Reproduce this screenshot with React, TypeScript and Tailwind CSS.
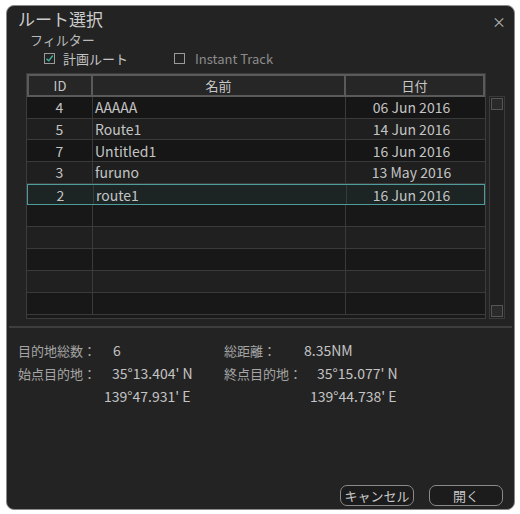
const font = { fontFamily: '"Noto Sans CJK JP", "Noto Sans", sans-serif' };

const rows = [
  { id: "4", name: "AAAAA", date: "06 Jun 2016" },
  { id: "5", name: "Route1", date: "14 Jun 2016" },
  { id: "7", name: "Untitled1", date: "16 Jun 2016" },
  { id: "3", name: "furuno", date: "13 May 2016" },
  { id: "2", name: "route1", date: "16 Jun 2016", selected: true },
];

function Check({ checked }: { checked?: boolean }) {
  return (
    <span className="inline-flex h-[11px] w-[11px] items-center justify-center border border-[#9a9a9a]">
      {checked && (
        <svg viewBox="0 0 12 12" className="h-[11px] w-[11px]">
          <path d="M2 6.5 L5 9 L10.5 2" fill="none" stroke="#3fb0a0" strokeWidth="1.8" />
        </svg>
      )}
    </span>
  );
}

export default function App() {
  const empty = Array.from({ length: 5 });
  return (
    <div className="h-[514px] w-[520px] bg-white pl-[6px] pt-[5px] text-[#c4c4c4]" style={font}>
      <div className="flex h-[505px] w-[509px] flex-col rounded-[8px] border border-[#8a8a8a] bg-[#232323]">
        <div className="flex h-[22px] items-center justify-between pl-[11px] pr-[8px] pt-[2px]">
          <span className="text-[17px] leading-none text-[#cccccc]">ルート選択</span>
          <span className="mt-[6px] text-[14px] leading-none text-[#b5b5b5]">×</span>
        </div>
        <div className="pl-[23px] pt-[4px] text-[13px] leading-[15px] text-[#b8b8b8]">フィルター</div>
        <div className="flex h-[22px] items-center pl-[37px] text-[13px] leading-none">
          <Check checked />
          <span className="ml-[8px]">計画ルート</span>
          <span className="ml-[46px]"><Check /></span>
          <span className="ml-[10px] text-[#8c8c8c]">Instant Track</span>
        </div>
        <div className="mt-[4px] flex pl-[19px]">
          <div className="w-[460px] border border-[#3c3c3c] bg-[#1a1a1a]">
            <div className="grid h-[23px] grid-cols-[66px_253px_1fr] text-[13px] leading-none text-[#c8c8c8]">
              <div className="flex items-center justify-center border-2 border-[#5a5a5a] bg-[#262626]">ID</div>
              <div className="flex items-center justify-center border-2 border-l-0 border-[#5a5a5a] bg-[#262626]">名前</div>
              <div className="flex items-center justify-center border-2 border-l-0 border-[#5a5a5a] bg-[#262626]">日付</div>
            </div>
            {rows.map((r, i) => (
              <div
                key={r.id}
                className={
                  r.selected
                    ? "grid h-[21.7px] grid-cols-[66px_253px_1fr] border border-[#4f9c9c] bg-[#1c2524] text-[14px] leading-none"
                    : i % 2 === 0
                    ? "grid h-[21.7px] grid-cols-[66px_253px_1fr] border-b border-[#3a3a3a] bg-[#161616] text-[14px] leading-none"
                    : "grid h-[21.7px] grid-cols-[66px_253px_1fr] border-b border-[#3a3a3a] bg-[#1f1f1f] text-[14px] leading-none"
                }
              >
                <div className="flex items-center justify-center border-r border-[#3a3a3a]">{r.id}</div>
                <div className="flex items-center border-r border-[#3a3a3a] pl-[2px]">{r.name}</div>
                <div className="flex items-center justify-center pr-[8px]">{r.date}</div>
              </div>
            ))}
            {empty.map((_, i) => (
              <div
                key={i}
                className={
                  i % 2 === 0
                    ? "grid h-[22px] grid-cols-[66px_253px_1fr] border-b border-[#3a3a3a] bg-[#181818]"
                    : "grid h-[22px] grid-cols-[66px_253px_1fr] border-b border-[#3a3a3a] bg-[#202020]"
                }
              >
                <div className="border-r border-[#3a3a3a]" />
                <div className="border-r border-[#3a3a3a]" />
                <div />
              </div>
            ))}
          </div>
          <div className="ml-[3px] mt-[23px] flex h-[223px] w-[16px] flex-col justify-between border border-[#3a3a3a] bg-[#202020] p-[1px]">
            <div className="h-[12px] border border-[#555555] bg-[#2a2a2a]" />
            <div className="h-[12px] border border-[#555555] bg-[#2a2a2a]" />
          </div>
        </div>
        <div className="mx-[2px] mt-[7px] h-[2px] bg-[#3e3e3e]" />
        <div className="mt-[12px] grid grid-cols-[206px_1fr] pl-[11px] text-[13px] leading-none">
          <div className="flex h-[20px] items-center">
            <span className="w-[95px] text-[#a5a5a5]">目的地総数：</span>
            <span className="text-[14px]">6</span>
          </div>
          <div className="flex h-[20px] items-center">
            <span className="w-[80px] text-[#a5a5a5]">総距離：</span>
            <span className="text-[14px]">8.35NM</span>
          </div>
          <div className="mt-[3px] flex h-[20px] items-center">
            <span className="w-[94px] text-[#a5a5a5]">始点目的地：</span>
            <span className="text-[14px]">35°13.404' N</span>
          </div>
          <div className="mt-[3px] flex h-[20px] items-center">
            <span className="w-[93px] text-[#a5a5a5]">終点目的地：</span>
            <span className="text-[14px]">35°15.077' N</span>
          </div>
          <div className="mt-[3px] flex h-[20px] items-center pl-[86px] text-[14px]">139°47.931' E</div>
          <div className="mt-[3px] flex h-[20px] items-center pl-[86px] text-[14px]">139°44.738' E</div>
        </div>
        <div className="mt-auto mb-[3px] flex justify-end gap-[15px] pr-[11px]">
          <button className="flex h-[21px] w-[74px] items-center justify-center rounded-[7px] border border-[#8a8a8a] bg-[#1c1c1c] text-[13px] leading-none text-[#c8c8c8]">
            キャンセル
          </button>
          <button className="flex h-[21px] w-[74px] items-center justify-center rounded-[7px] border border-[#8a8a8a] bg-[#1c1c1c] text-[13px] leading-none text-[#c8c8c8]">
            開く
          </button>
        </div>
      </div>
    </div>
  );
}
